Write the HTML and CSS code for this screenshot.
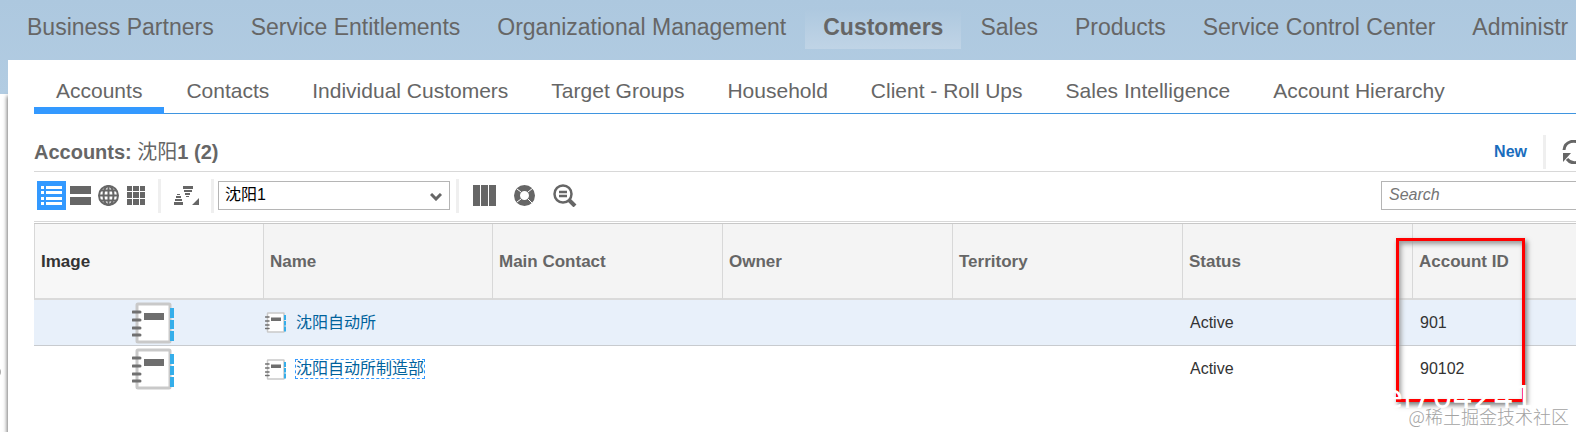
FILE: index.html
```
<!DOCTYPE html>
<html lang="en">
<head>
  <meta charset="UTF-8" />
  <title>Accounts</title>
  <link rel="stylesheet" href="styles.css">
</head>
<body>
  <!-- Notebook icon, used in two sizes in the table -->
  <svg class="defs" width="0" height="0">
    <symbol id="notebook" viewBox="0 0 42 42">
      <rect x="5" y="2" width="33" height="38" rx="1" fill="#fff" stroke="#c9c9c9" stroke-width="3"/>
      <rect x="12" y="11" width="20" height="7" fill="#6e6e6e"/>
      <path d="M1 10h7M1 18h7M1 26h7M1 33h7" stroke="#707070" stroke-width="3" stroke-linecap="round"/>
      <path d="M40 6v10M40 18v9M40 29v10" stroke="#35aeea" stroke-width="4"/>
    </symbol>
  </svg>

  <nav class="top-nav">
    <a href="#">Business Partners</a>
    <a href="#">Service Entitlements</a>
    <a href="#">Organizational Management</a>
    <a href="#" class="active">Customers</a>
    <a href="#">Sales</a>
    <a href="#">Products</a>
    <a href="#">Service Control Center</a>
    <a href="#">Administr</a>
  </nav>

  <main class="panel">
    <nav class="tabs">
      <a href="#" class="active">Accounts</a>
      <a href="#">Contacts</a>
      <a href="#">Individual Customers</a>
      <a href="#">Target Groups</a>
      <a href="#">Household</a>
      <a href="#">Client - Roll Ups</a>
      <a href="#">Sales Intelligence</a>
      <a href="#">Account Hierarchy</a>
    </nav>

    <header class="title-bar">
      <h1>Accounts: <span>沈阳</span>1 (2)</h1>
      <button class="new-btn">New</button>
      <i class="sep"></i>
      <button class="refresh-btn" aria-label="Refresh">
        <svg width="24" height="24" viewBox="0 0 24 24">
          <path d="M2 10A9.500 9.500 0 0 1 19 5M22 14A9.500 9.500 0 0 1 5 19" fill="none" stroke="#666" stroke-width="3"/>
          <path d="M1 13h8l-8 9zM23 11h-8l8-9z" fill="#666"/>
        </svg>
      </button>
    </header>

    <div class="toolbar">
      <div class="views">
        <button class="icon-btn on" aria-label="List">
          <svg width="21" height="19" viewBox="0 0 21 19" fill="#fff">
            <path d="M0 0h3v3H0zM0 5h3v3H0zM0 11h3v3H0zM0 16h3v3H0zM5 0h16v3H5zM5 5h16v3H5zM5 11h16v3H5zM5 16h16v3H5z"/>
          </svg>
        </button>
        <button class="icon-btn" aria-label="Cards">
          <svg width="21" height="19" viewBox="0 0 21 19" fill="#666"><path d="M0 0h21v8H0zM0 11h21v8H0z"/></svg>
        </button>
        <button class="icon-btn" aria-label="Map">
          <svg width="21" height="21" viewBox="0 0 21 21">
            <circle cx="10.500" cy="10.500" r="9.500" fill="none" stroke="#666" stroke-width="2"/>
            <path d="M10.500 1v19M1 10.500h19M3 5.500h15M3 15.500h15" stroke="#666" stroke-width="2" fill="none"/>
            <ellipse cx="10.500" cy="10.500" rx="5" ry="9.500" fill="none" stroke="#666" stroke-width="2"/>
          </svg>
        </button>
        <button class="icon-btn" aria-label="Tiles">
          <svg width="18" height="19" viewBox="0 0 18 19" fill="#666">
            <path d="M0 0h5v5H0zM6 0h6v5H6zM13 0h5v5h-5zM0 6h5v6H0zM6 6h6v6H6zM13 6h5v6h-5zM0 13h5v6H0zM6 13h6v6H6zM13 13h5v6h-5z"/>
          </svg>
        </button>
      </div>
      <i class="sep"></i>
      <button class="sort-btn" aria-label="Sort">
        <svg width="25" height="19" viewBox="0 0 25 19" fill="#666">
          <path d="M9 0h10v3H9zM10 4h8v2h-8zM11 7h5v2h-5zM12 10h3v1h-3zM3 8h3v1H3zM2 10h5v2H2zM1 13h7v2H1zM0 16h9v3H0zM25 12v7h-7z"/>
        </svg>
      </button>
      <i class="sep"></i>
      <div class="query">
        <select aria-label="Query">
          <option>沈阳1</option>
        </select>
        <svg class="chevron" width="12" height="8" viewBox="0 0 12 8"><path d="M1 1l5 5 5-5" fill="none" stroke="#666" stroke-width="3"/></svg>
      </div>
      <i class="sep"></i>
      <div class="tools">
        <button aria-label="Columns">
          <svg width="23" height="21" viewBox="0 0 23 21" fill="#666"><path d="M0 0h7v21H0zM8 0h7v21H8zM16 0h7v21h-7z"/></svg>
        </button>
        <button aria-label="Chart">
          <svg width="21" height="21" viewBox="0 0 21 21">
            <circle cx="10.500" cy="10.500" r="7.500" fill="none" stroke="#666" stroke-width="6"/>
            <path d="M3 4l4 3M14 7l5-4M14 14l4 4M7 14l-4 3" stroke="#fff"/>
          </svg>
        </button>
        <button aria-label="Advanced search">
          <svg width="24" height="23" viewBox="0 0 24 23" fill="none" stroke="#666">
            <circle cx="10" cy="10" r="8.500" stroke-width="2.500"/>
            <path d="M6 8h8M6 12h8" stroke-width="2.500"/>
            <path d="M16 16l6 6" stroke-width="4"/>
          </svg>
        </button>
      </div>
      <input class="search" type="search" placeholder="Search" aria-label="Search">
    </div>

    <table class="accounts">
      <thead>
        <tr>
          <th class="sorted">Image</th>
          <th class="name-col">Name</th>
          <th>Main Contact</th>
          <th>Owner</th>
          <th>Territory</th>
          <th>Status</th>
          <th class="last">Account ID</th>
        </tr>
      </thead>
      <tbody>
        <tr class="selected">
          <td class="image"><svg width="42" height="42"><use href="#notebook"/></svg></td>
          <td><div class="name"><svg width="21" height="21"><use href="#notebook"/></svg><a href="#">沈阳自动所</a></div></td>
          <td></td>
          <td></td>
          <td></td>
          <td>Active</td>
          <td>901</td>
        </tr>
        <tr>
          <td class="image"><svg width="42" height="42"><use href="#notebook"/></svg></td>
          <td><div class="name"><svg width="21" height="21"><use href="#notebook"/></svg><a href="#" class="focused">沈阳自动所制造部</a></div></td>
          <td></td>
          <td></td>
          <td></td>
          <td>Active</td>
          <td>90102</td>
        </tr>
      </tbody>
    </table>
  </main>

  <span class="handle"></span>
  <div class="callout"></div>
  <div class="ghost">ei704241</div>
  <div class="watermark">@稀土掘金技术社区</div>
</body>
</html>
```
FILE: styles.css
```
* {
  box-sizing: border-box;
}

body {
  position: relative;
  margin: 0;
  min-height: 100vh;
  overflow: hidden;
  background: #fff linear-gradient(#adc8df, #b2cce2) no-repeat 0 0 / 100% 94px;
  font-family: "Liberation Sans", Arial, "Noto Sans CJK SC", sans-serif;
  font-size: 16px;
  color: #333;
}

a {
  text-decoration: none;
}

button {
  display: flex;
  align-items: center;
  justify-content: center;
  padding: 0;
  border: 0;
  background: none;
  cursor: pointer;
}

.defs {
  position: absolute;
}

/* top navigation */
.top-nav {
  display: flex;
  gap: 1px;
  height: 60px;
  padding: 8px 0 12px 9px;
  overflow: hidden;
}

.top-nav a {
  flex: none;
  padding: 0 18px;
  font-size: 23px;
  line-height: 38px;
  color: #666;
}

.top-nav .active {
  height: 41px;
  font-weight: bold;
  background: linear-gradient(#adc8df, #c0d4e6);
}

/* white work area */
.panel {
  min-height: calc(100vh - 60px);
  margin-left: 8px;
  padding: 12px 0 0 26px;
  background: #fff;
  box-shadow: -1px 36px 4px #777;
}

.tabs {
  display: flex;
  height: 42px;
  border-bottom: 1px solid #3f95e0;
}

.tabs a {
  height: 42px;
  padding: 0 21px 0 22px;
  font-size: 21px;
  line-height: 38px;
  color: #666;
  white-space: nowrap;
}

.tabs .active {
  padding-right: 22px;
  border-bottom: 7px solid #3399ff;
}

.title-bar {
  display: flex;
  align-items: center;
  height: 58px;
  padding-top: 18px;
  border-bottom: 1px solid #d8d8d8;
  overflow: hidden;
}

.title-bar h1 {
  flex: 1;
  margin: 0;
  font-size: 20px;
  line-height: 24px;
  color: #666;
}

.title-bar h1 span {
  font-weight: normal;
}

.new-btn {
  margin-right: 16px;
  font: bold 16px "Liberation Sans", Arial, sans-serif;
  color: #1a6dbd;
}

.sep {
  flex: none;
  width: 3px;
  height: 34px;
  background: #efefef;
}

.refresh-btn {
  width: 30px;
  padding-left: 16px;
  justify-content: flex-start;
  overflow: hidden;
}

.refresh-btn svg {
  flex: none;
}

/* toolbar */
.toolbar {
  display: flex;
  align-items: center;
  height: 50px;
  padding-bottom: 2px;
  border-bottom: 1px solid #d8d8d8;
}

.views {
  display: flex;
  margin: 0 8px 0 3px;
}

.icon-btn {
  width: 28px;
  height: 29px;
}

.icon-btn.on {
  width: 29px;
  background: #3399ff;
}

.sort-btn {
  width: 50px;
}

.query {
  position: relative;
  margin: 0 6px 0 4px;
}

.query select {
  appearance: none;
  display: block;
  width: 232px;
  height: 29px;
  padding: 0 6px 2px;
  border: 1px solid #b5b5b5;
  border-radius: 0;
  background: #fff;
  font: 16px "Liberation Sans", Arial, "Noto Sans CJK SC", sans-serif;
  color: #000;
}

.chevron {
  position: absolute;
  top: 12px;
  right: 8px;
}

.tools {
  display: flex;
  gap: 18px;
  margin-left: 14px;
}

.search {
  width: 210px;
  height: 29px;
  margin: 0 -15px 0 auto;
  padding: 0 7px 2px;
  border: 1px solid #b5b5b5;
  border-radius: 0;
  font: italic 16px "Liberation Sans", Arial, sans-serif;
}

.search::placeholder {
  color: #757575;
}

/* accounts table */
.accounts {
  width: 100%;
  margin-top: 1px;
  border-collapse: separate;
  border-spacing: 0;
  border-top: 1px solid #c8c8c8;
  table-layout: fixed;
}

.accounts th {
  width: 230px;
  height: 76px;
  padding: 2px 6px 0;
  border-left: 1px solid #d8d8d8;
  border-bottom: 2px solid #dadada;
  background: #f4f4f4;
  font-size: 17px;
  text-align: left;
  color: #666;
}

.accounts th.sorted {
  width: 229px;
  background: #f7f7f7;
  color: #333;
}

.accounts th.name-col {
  width: 229px;
}

.accounts th.last {
  width: auto;
}

.accounts td {
  height: 46px;
  padding: 0 8px;
}

.accounts .selected td {
  border-bottom: 1px solid #c8cbcf;
  background: #e8f0fa;
}

.accounts .image {
  padding: 0 0 0 8px;
  text-align: center;
}

.accounts svg {
  display: inline-block;
  vertical-align: middle;
}

.name {
  display: flex;
  align-items: center;
  gap: 9px;
  margin-left: -6px;
}

.name a {
  border: 1px dashed transparent;
  line-height: 18px;
  color: #00629c;
}

.name a.focused {
  border-color: #3399ff;
}

/* overlays */
.handle {
  position: absolute;
  top: 366px;
  left: -11px;
  width: 12px;
  height: 12px;
  border-radius: 50%;
  background: #aaa;
}

.callout {
  position: absolute;
  top: 238px;
  right: 51px;
  width: 129px;
  height: 164px;
  border: 3px solid #f00;
  box-shadow: 2px 3px 5px #777, inset 2px 3px 5px #999;
}

.ghost {
  position: absolute;
  top: 383px;
  right: 42px;
  font-family: "DejaVu Sans", sans-serif;
  font-size: 32px;
  line-height: 28px;
  color: #fff;
}

.watermark {
  position: absolute;
  right: 7px;
  bottom: 5px;
  font: 18px "Noto Sans CJK SC", sans-serif;
  font-weight: 300;
  line-height: 22px;
  color: #a3a3a3;
}
```
